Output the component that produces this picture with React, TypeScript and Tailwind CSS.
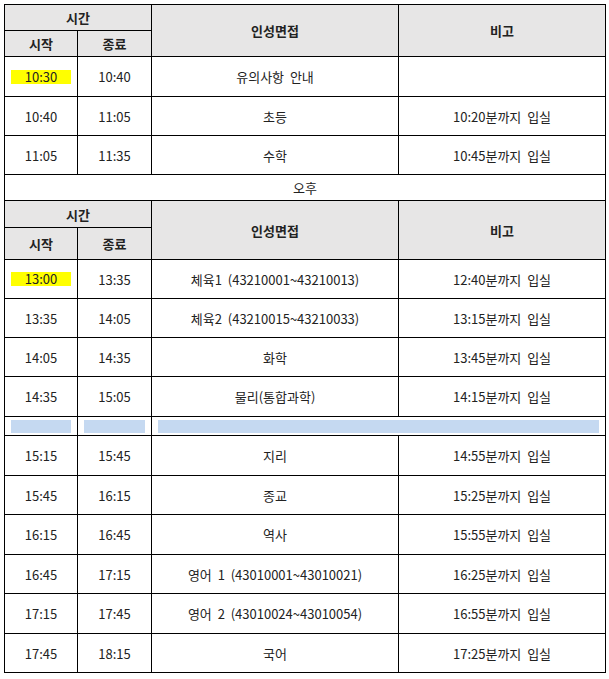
import React from "react";

type Row = { s: string; e: string; name: string; note: string; hl?: boolean; h: number };

const morning: Row[] = [
  { s: "10:30", e: "10:40", name: "유의사항  안내", note: "", hl: true, h: 40 },
  { s: "10:40", e: "11:05", name: "초등", note: "10:20분까지  입실", h: 39 },
  { s: "11:05", e: "11:35", name: "수학", note: "10:45분까지  입실", h: 39 },
];

const afternoon1: Row[] = [
  { s: "13:00", e: "13:35", name: "체육1  (43210001~43210013)", note: "12:40분까지  입실", hl: true, h: 39 },
  { s: "13:35", e: "14:05", name: "체육2  (43210015~43210033)", note: "13:15분까지  입실", h: 39 },
  { s: "14:05", e: "14:35", name: "화학", note: "13:45분까지  입실", h: 39 },
  { s: "14:35", e: "15:05", name: "물리(통합과학)", note: "14:15분까지  입실", h: 40 },
];

const afternoon2: Row[] = [
  { s: "15:15", e: "15:45", name: "지리", note: "14:55분까지  입실", h: 40 },
  { s: "15:45", e: "16:15", name: "종교", note: "15:25분까지  입실", h: 39 },
  { s: "16:15", e: "16:45", name: "역사", note: "15:55분까지  입실", h: 40 },
  { s: "16:45", e: "17:15", name: "영어  1  (43010001~43010021)", note: "16:25분까지  입실", h: 39 },
  { s: "17:15", e: "17:45", name: "영어  2  (43010024~43010054)", note: "16:55분까지  입실", h: 40 },
  { s: "17:45", e: "18:15", name: "국어", note: "17:25분까지  입실", h: 39 },
];

const td = "border border-black text-center align-middle p-0 whitespace-pre";
const th = "border border-black text-center align-middle p-0 font-bold bg-[#e7e6e6] whitespace-pre";

function DataRow({ r }: { r: Row }) {
  return (
    <tr style={{ height: r.h }}>
      <td className={td}>
        {r.hl ? (
          <div className="mx-[6px] bg-[#ffff00] leading-[14px] h-[14px]">{r.s}</div>
        ) : (
          r.s
        )}
      </td>
      <td className={td}>{r.e}</td>
      <td className={td}>{r.name}</td>
      <td className={td}>{r.note}</td>
    </tr>
  );
}

function Header({ h1, h2 }: { h1: number; h2: number }) {
  return (
    <>
      <tr style={{ height: h1 }}>
        <th className={th} colSpan={2}>시간</th>
        <th className={th} rowSpan={2}>인성면접</th>
        <th className={th} rowSpan={2}>비고</th>
      </tr>
      <tr style={{ height: h2 }}>
        <th className={th}>시작</th>
        <th className={th}>종료</th>
      </tr>
    </>
  );
}

export default function App() {
  return (
    <div className="w-[609px] h-[679px] bg-white pt-[4px] pl-[4px]">
      <table
        className="table-fixed border-collapse w-[601px] text-[13px] text-[#222] leading-none"
        style={{ fontFamily: '"Noto Sans CJK KR", "Noto Sans", sans-serif' }}
      >
        <colgroup>
          <col className="w-[73px]" />
          <col className="w-[74px]" />
          <col className="w-[247px]" />
          <col className="w-[207px]" />
        </colgroup>
        <tbody>
          <Header h1={26} h2={26} />
          {morning.map((r) => (
            <DataRow key={r.s} r={r} />
          ))}
          <tr style={{ height: 26 }}>
            <td className={td} colSpan={4}>오후</td>
          </tr>
          <Header h1={27} h2={32} />
          {afternoon1.map((r) => (
            <DataRow key={r.s} r={r} />
          ))}
          <tr style={{ height: 19 }}>
            <td className={td}>
              <div className="mx-[6px] h-[13px] bg-[#c5d9f1]" />
            </td>
            <td className={td}>
              <div className="mx-[6px] h-[13px] bg-[#c5d9f1]" />
            </td>
            <td className={td} colSpan={2}>
              <div className="mx-[6px] h-[13px] bg-[#c5d9f1]" />
            </td>
          </tr>
          {afternoon2.map((r) => (
            <DataRow key={r.s} r={r} />
          ))}
        </tbody>
      </table>
    </div>
  );
}
